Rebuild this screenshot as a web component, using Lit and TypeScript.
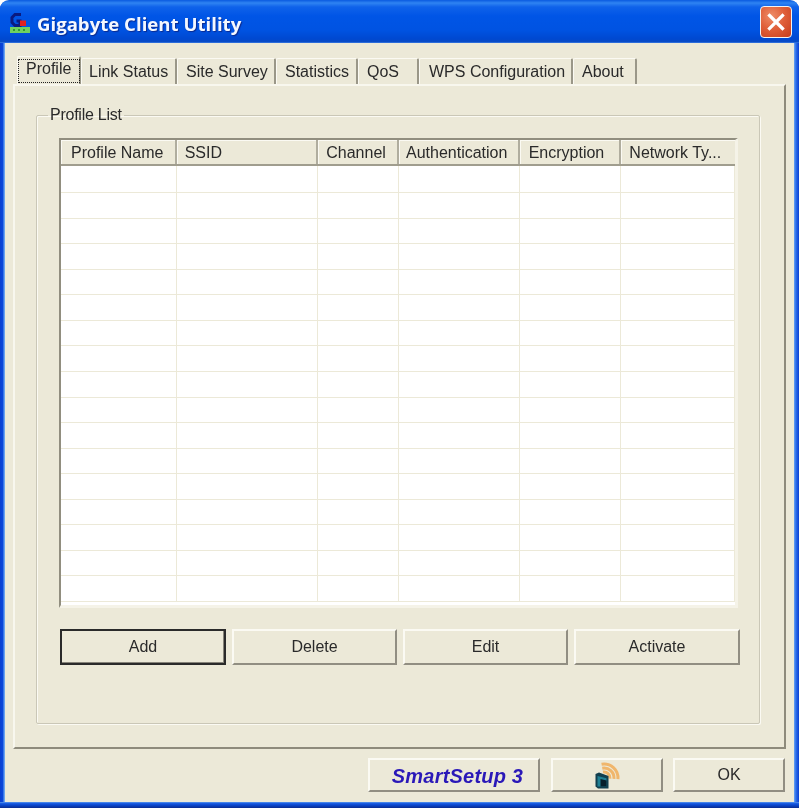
import { LitElement, html, css, svg } from "lit";
import { customElement } from "lit/decorators.js";

const TABS = [
  { label: "Profile", w: 64, pad: 8 },
  { label: "Link Status", w: 96, pad: 7 },
  { label: "Site Survey", w: 99, pad: 8 },
  { label: "Statistics", w: 82, pad: 8 },
  { label: "QoS", w: 61, pad: 8 },
  { label: "WPS Configuration", w: 154, pad: 9 },
  { label: "About", w: 64, pad: 8 },
];
const COLS = [
  { label: "Profile Name", w: 116, pad: 10 },
  { label: "SSID", w: 142, pad: 8 },
  { label: "Channel", w: 81, pad: 8 },
  { label: "Authentication", w: 121, pad: 7 },
  { label: "Encryption", w: 102, pad: 9 },
  { label: "Network Ty...", w: 114, pad: 8 },
];
const ROWS = Array.from({ length: 17 });

const logo = svg`<svg class="logo" width="24" height="24" viewBox="0 0 24 24">
  <path d="M13 3.5H7L4 6.5v5l3 3h5v-4.5H8.5" fill="none" stroke="#0a1a80" stroke-width="3"/>
  <rect x="12" y="9.5" width="6" height="5.5" fill="#e02020"/>
  <rect x="2" y="16" width="20" height="6" fill="#6fd060"/>
  <path d="M5 18h2v2H5zM10 18h2v2h-2zM15 18h2v2h-2z" fill="#2f9a30"/>
</svg>`;

const wifi = svg`<svg class="wifi-icon" width="28" height="28" viewBox="0 0 28 28">
  <path d="M9.96 11.09A6 6 0 0 1 16.98 17.52M9.26 7.15A10 10 0 0 1 20.96 17.87M8.56 3.21A14 14 0 0 1 24.94 18.22" fill="none" stroke="#f0b66c" stroke-width="3"/>
  <path d="M2.5 13l3.5-1.5 9.5 3.5v12.5H5l-2.5-2z" fill="#123f4e"/>
  <path d="M4.5 15l9 2.2v8.3h-9z" fill="#1f8094"/>
  <path d="M7.5 18l6 1.4v6.1h-6z" fill="#071f2a"/>
</svg>`;

@customElement("app-root")
export class AppRoot extends LitElement {
  static styles = css`
    :host {
      display: block;
      width: 799px;
      height: 808px;
      background: #fff;
      font-family: "Liberation Sans", Arial, sans-serif;
      font-size: 16px;
      color: #2a2a2a;
      overflow: hidden;
    }
    .window {
      height: 808px;
      box-sizing: border-box;
      display: flex;
      flex-direction: column;
      border-radius: 9px 9px 0 0;
      overflow: hidden;
      filter: blur(0.4px);
      background: linear-gradient(90deg, #0a3fd0 0, #0a48dc 3px, #6aa4f0 4px, #6aa4f0 5px, #ece9d8 5px, #ece9d8 794px, #6aa4f0 794px, #2a6cea 796px, #0a3fd0 799px);
    }
    .titlebar {
      height: 43px;
      flex: none;
      box-sizing: border-box;
      display: flex;
      align-items: center;
      padding: 0 8px 0 8px;
      background: linear-gradient(180deg, #0a5ae0 0, #2f84f2 3px, #0f62ea 7px, #0055e6 16px, #0053e2 30px, #0048d0 39px, #0a4cc4 42px, #4a8cf0 43px);
    }
    .title {
      flex: 1;
      margin-left: 5px;
      margin-top: 4px;
      font-family: "Open Sans", sans-serif;
      font-weight: 700;
      font-size: 18.6px;
      color: #f4f8ff;
      text-shadow: 1px 1px 1px #0a2a90;
      white-space: nowrap;
    }
    .logo { display: block; margin-top: 3px; }
    .close {
      width: 32px;
      height: 32px;
      box-sizing: border-box;
      margin-right: -1px;
      border: 1.5px solid #f2f2f2;
      border-radius: 4px;
      background: radial-gradient(circle at 35% 30%, #ee8d68 0, #e0603a 45%, #c63c1c 100%);
      display: flex;
      align-items: center;
      justify-content: center;
    }
    .client {
      flex: 1;
      width: 789px;
      margin-left: 5px;
      box-sizing: border-box;
      padding: 13px 0 0 8px;
      display: flex;
      flex-direction: column;
      background: #ece9d8;
    }
    .bottom {
      flex: none;
      height: 6px;
      background: linear-gradient(180deg, #5a98ee 0, #1a5ce0 1.5px, #0a48d0 3px, #0a2c90 6px);
    }
    .tabs {
      display: flex;
      height: 28px;
      margin-left: 4px;
      align-items: flex-end;
      flex: none;
    }
    .tab {
      box-sizing: border-box;
      height: 26px;
      border-right: 2px solid #9a9788;
      border-top: 1px solid #fbfaf3;
      border-left: 1px solid #fbfaf3;
      border-radius: 2px 2px 0 0;
      line-height: 25px;
      white-space: nowrap;
    }
    .tab.sel {
      height: 28px;
      line-height: 23px;
      position: relative;
    }
    .tab.sel::after {
      content: "";
      position: absolute;
      left: 0;
      top: 2px;
      width: 60px;
      height: 22px;
      border: 1px dotted #222;
    }
    .panel {
      box-sizing: border-box;
      width: 773px;
      height: 665px;
      flex: none;
      border-top: 2px solid #f8f7ee;
      border-left: 2px solid #f8f7ee;
      border-right: 2px solid #8e8b7c;
      border-bottom: 2px solid #8e8b7c;
      padding: 20px 0 0 21px;
    }
    fieldset {
      box-sizing: border-box;
      margin: 0;
      width: 724px;
      height: 618px;
      padding: 14px 0 0 0;
      border: 1px solid #cac7b7;
      box-shadow: 1px 1px 0 #fbfaf3, inset 1px 1px 0 #fbfaf3;
      border-radius: 2px;
    }
    legend {
      padding: 0 2px 0 2px;
      margin-left: 11px;
      line-height: 18px;
      letter-spacing: -0.25px;
    }
    .list {
      box-sizing: border-box;
      width: 679px;
      height: 470px;
      margin-left: 22px;
      border-top: 2px solid #918e7f;
      border-left: 2px solid #918e7f;
      border-right: 3px solid #f5f3e8;
      border-bottom: 3px solid #f5f3e8;
      background: #fff;
      overflow: hidden;
    }
    .head {
      display: flex;
      height: 26px;
      box-sizing: border-box;
      background: #ece9d8;
      border-bottom: 2px solid #a09d8e;
    }
    .hcell {
      box-sizing: border-box;
      border-right: 2px solid #b0ad9e;
      box-shadow: inset 1px 1px 0 #fbfaf3;
      white-space: nowrap;
      line-height: 20px;
      padding-top: 3px;
    }
    .hcell:last-child { border-right: 0; }
    .row {
      height: 25.57px;
      box-sizing: border-box;
      border-bottom: 1px solid #ece9d8;
      display: flex;
    }
    .row:first-child { height: 27px; }
    .cell {
      box-sizing: border-box;
      border-right: 1px solid #ece9d8;
    }
    .actions {
      display: flex;
      gap: 6px;
      margin: 21px 0 0 23px;
    }
    .btn {
      box-sizing: border-box;
      height: 36px;
      border-top: 2px solid #fbfaf3;
      border-left: 2px solid #fbfaf3;
      border-right: 2px solid #918e82;
      border-bottom: 2px solid #918e82;
      background: #ece9d8;
      color: #2a2a2a;
      font: inherit;
      padding: 0;
      display: flex;
      align-items: center;
      justify-content: center;
    }
    .btn.def {
      border: 2px solid #2a2a2a;
      box-shadow: inset -1px -1px 0 #87847a;
    }
    .a { width: 166px; }
    .b { width: 165px; }
    .footer {
      flex: 1;
      display: flex;
      justify-content: flex-end;
      gap: 10px;
      padding: 9px 9px 0 0;
    }
    .footer .btn { height: 34px; }
    .smart {
      width: 172px;
      margin-right: 1px;
      padding: 2px 0 0 7px;
      font-weight: 700;
      font-style: italic;
      font-size: 20px;
      color: #2a18b8;
      letter-spacing: 0.2px;
    }
    .wifi { width: 112px; }
    .ok { width: 112px; }
    .wifi-icon { display: block; margin: 0 1px 0 0; }
  `;

  render() {
    return html`<div class="window">
      <div class="titlebar">
        ${logo}
        <div class="title">Gigabyte Client Utility</div>
        <div class="close">
          <svg width="18" height="18" viewBox="0 0 18 18"><path d="M2.5 2.5l13 13M15.5 2.5l-13 13" stroke="#fff" stroke-width="3.2" stroke-linecap="square"/></svg>
        </div>
      </div>
      <div class="client">
        <div class="tabs">
          ${TABS.map(
            (t, i) => html`<div class="tab ${i === 0 ? "sel" : ""}" style="width:${t.w}px;padding-left:${t.pad}px">${t.label}</div>`
          )}
        </div>
        <div class="panel">
          <fieldset>
            <legend>Profile List</legend>
            <div class="list">
              <div class="head">
                ${COLS.map((c) => html`<div class="hcell" style="width:${c.w}px;padding-left:${c.pad}px">${c.label}</div>`)}
              </div>
              <div class="body">
                ${ROWS.map(
                  () => html`<div class="row">${COLS.map((c) => html`<div class="cell" style="width:${c.w}px"></div>`)}</div>`
                )}
              </div>
            </div>
            <div class="actions">
              <button class="btn a def">Add</button>
              <button class="btn b">Delete</button>
              <button class="btn b">Edit</button>
              <button class="btn a">Activate</button>
            </div>
          </fieldset>
        </div>
        <div class="footer">
          <button class="btn smart">SmartSetup 3</button>
          <button class="btn wifi">${wifi}</button>
          <button class="btn ok">OK</button>
        </div>
      </div>
      <div class="bottom"></div>
    </div>`;
  }
}
